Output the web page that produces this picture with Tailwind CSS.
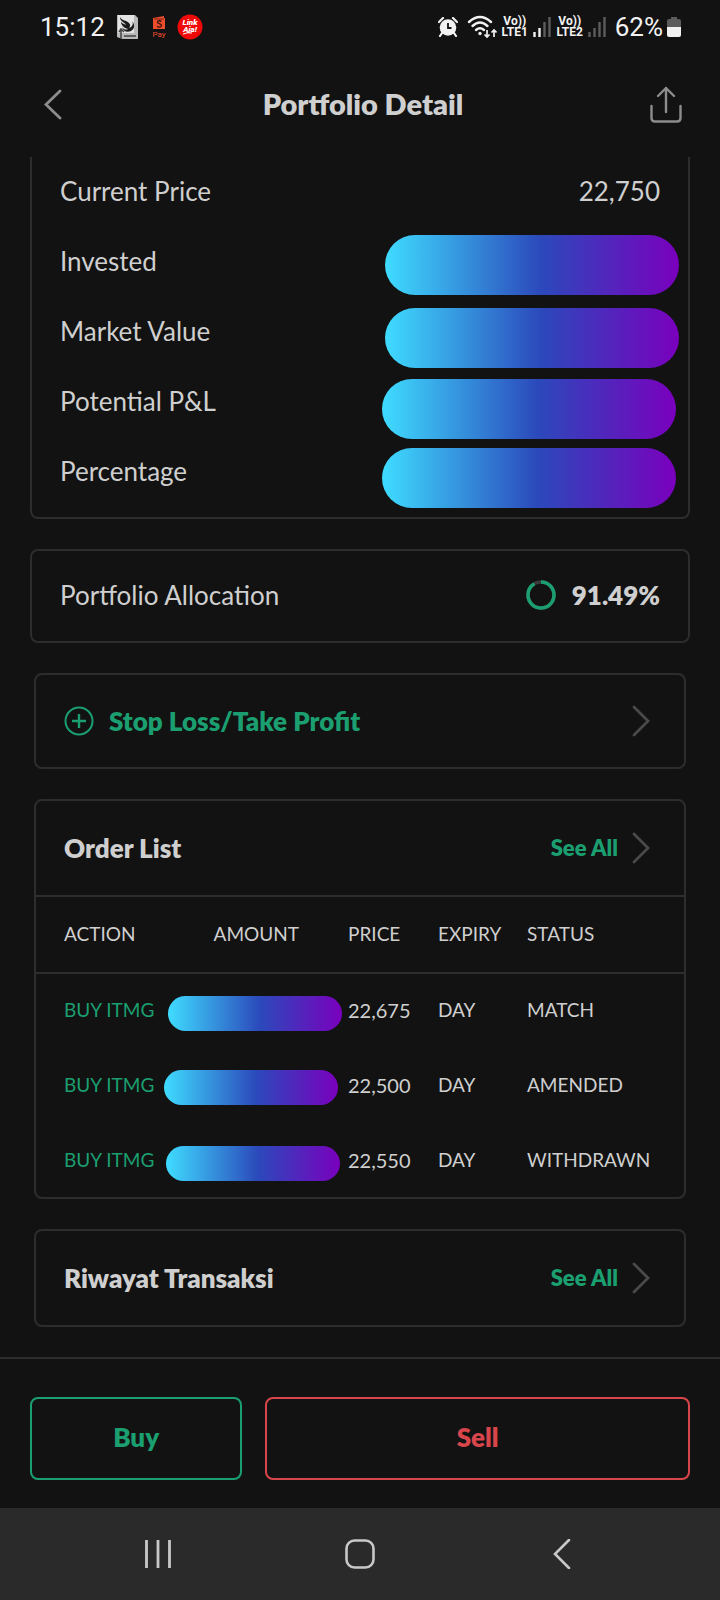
<!DOCTYPE html>
<html lang="id">
<head>
    <meta charset="UTF-8">
    <meta name="viewport" content="width=device-width, initial-scale=1.0">
    <title>Portfolio Detail</title>
    <script src="https://cdn.jsdelivr.net/npm/@tailwindcss/browser@4"></script>
</head>
<body class="bg-[#121212] text-[#cfcfcf] font-['Lato',sans-serif] text-[26px] leading-8">
    <div class="min-h-screen flex flex-col">

        <!-- Status bar -->
        <div class="h-[54px] pl-10 pr-[39px] flex items-center justify-between text-[#f2f2f2] font-['Roboto',sans-serif]">
            <div class="flex items-center">
                <span class="text-[26px]">15:12</span>
                <svg class="ml-3 w-[22px] h-[26px]" viewBox="0 0 22 26">
                    <path d="M0 1h18l3 3v21H5l-5-2z" fill="#b9b9b9"/>
                    <path d="M1 1h16v18H1z" fill="#e4e4e4"/>
                    <path d="M3 3c2 4 6 3 9 6 2 2 1 4 0 5 3-1 5-4 3-7 3 3 3 8-1 10-4 2-8 0-9-4 2 3 5 3 6 2C7 14 4 11 4 8c2 2 4 2 5 3C8 8 3 8 3 3z" fill="#1b1b1b"/>
                    <path d="M4 15v10M2 18l2-3 3 3M7 22h12" stroke="#444" stroke-width="1.5" fill="none"/>
                </svg>
                <svg class="ml-3 w-4 h-[26px]" viewBox="0 0 16 26">
                    <path d="M2 4l11-2v2h1v11H2z" fill="#ee4d2d"/>
                    <path d="M3 5h10" stroke="#7c2414" stroke-width="1"/>
                    <path d="M10.500 7.500c-2-1.500-4.500-.5-4 1 .5 1.300 4 1 4 3s-3 2-4.500.7" stroke="#3a120b" stroke-width="1.300" fill="none"/>
                    <text x="8" y="23" text-anchor="middle" font-size="8" fill="#ee4d2d">Pay</text>
                </svg>
                <svg class="ml-[10px] w-[26px] h-[26px]" viewBox="0 0 26 26">
                    <circle cx="13" cy="13" r="12.500" fill="#ef0a0a"/>
                    <g fill="#fff" font-size="8" font-weight="900" font-style="italic" text-anchor="middle">
                        <text x="13" y="11">Link</text>
                        <text x="13" y="17.500">Aja!</text>
                    </g>
                    <path d="M6 20q5-2 9-1" stroke="#fff" stroke-width="1" fill="none"/>
                </svg>
            </div>
            <div class="flex items-center">
                <svg class="w-5 h-5" viewBox="0 0 20 20">
                    <path d="M1 5l4-4M19 5l-4-4M4 16l-2 3M16 16l2 3" stroke="#f2f2f2" stroke-width="2.200" stroke-linecap="round"/>
                    <circle cx="10" cy="10.500" r="8.300" fill="#f2f2f2"/>
                    <path d="M10 6v5h3.500" stroke="#121212" stroke-width="1.800" fill="none"/>
                </svg>
                <svg class="ml-[9px] w-[30px] h-6" viewBox="0 0 30 24">
                    <g fill="none" stroke="#f2f2f2" stroke-width="2.400" stroke-linecap="round">
                        <path d="M2 7q11-10 22 0"/>
                        <path d="M5.500 11q7.500-7 15 0"/>
                        <path d="M9 15q4-3.500 8 0"/>
                    </g>
                    <circle cx="13" cy="18.500" r="1.700" fill="#f2f2f2"/>
                    <path d="M20 15v7M17.500 19.500l2.500 2.500 2.500-2.500M27 22v-7M24.500 17.500l2.500-2.500 2.500 2.500" fill="none" stroke="#f2f2f2" stroke-width="1.700"/>
                </svg>
                <div class="ml-1 w-[28px] text-[12px] leading-[11px] font-bold text-center">Vo))<br>LTE1</div>
                <svg class="ml-1 w-[18px] h-5" viewBox="0 0 18 20">
                    <path d="M1.500 20v-5M6.500 20v-9" stroke="#f2f2f2" stroke-width="2.400"/>
                    <path d="M11.500 20V5M16.500 20V0" stroke="#5c5c5c" stroke-width="2.400"/>
                </svg>
                <div class="ml-[5px] w-[28px] text-[12px] leading-[11px] font-bold text-center">Vo))<br>LTE2</div>
                <svg class="ml-1 w-[18px] h-5" viewBox="0 0 18 20">
                    <path d="M1.500 20v-5M6.500 20v-9M11.500 20V5M16.500 20V0" stroke="#5c5c5c" stroke-width="2.400"/>
                </svg>
                <span class="ml-[9px] text-[26px]">62%</span>
                <svg class="ml-1 w-[14px] h-5" viewBox="0 0 14 20">
                    <path d="M4 0h6v2h2q2 0 2 2v6H0V4q0-2 2-2h2z" fill="#5c5c5c"/>
                    <path d="M0 10h14v8q0 2-2 2H2q-2 0-2-2z" fill="#f2f2f2"/>
                </svg>
            </div>
        </div>

        <!-- Title bar -->
        <header class="h-[103px] pl-11 pr-[38px] pb-0.5 flex items-center justify-between">
            <button type="button" aria-label="Back" class="w-8 h-9">
                <svg class="w-[18px] h-9" viewBox="0 0 18 36">
                    <path d="M16 4L2 17.500 16 31" fill="none" stroke="#8c8c8c" stroke-width="2.800" stroke-linecap="round"/>
                </svg>
            </button>
            <h1 class="pb-0.5 text-[29px] font-extrabold">Portfolio Detail</h1>
            <button type="button" aria-label="Share" class="w-8 h-[38px]">
                <svg class="w-8 h-[38px]" viewBox="0 0 32 38">
                    <path d="M1.500 20v12q0 3.500 3.500 3.500h22q3.500 0 3.500-3.500V20M16 26V2M8 10l8-8 8 8" fill="none" stroke="#8c8c8c" stroke-width="2.400" stroke-linecap="round" stroke-linejoin="round"/>
                </svg>
            </button>
        </header>

        <main class="flex-1 flex flex-col gap-[30px] px-[30px] pb-[30px]">
            <!-- Position summary -->
            <dl class="border-2 border-t-0 border-[#2d2d2d] rounded-b-lg pb-[10px]">
                <div class="h-[70px] px-7 pb-0.5 flex items-center justify-between">
                    <dt>Current Price</dt>
                    <dd>22,750</dd>
                </div>
                <div class="relative h-[70px] px-7 pb-0.5 flex items-center">
                    <dt>Invested</dt>
                    <dd class="absolute right-[9px] top-2 w-[294px] h-[60px] rounded-full bg-linear-to-r/srgb from-[#3fdcff] via-[#2b49bb] via-53% to-[#7a00bd]"></dd>
                </div>
                <div class="relative h-[70px] px-7 pb-0.5 flex items-center">
                    <dt>Market Value</dt>
                    <dd class="absolute right-[9px] top-[11px] w-[294px] h-[60px] rounded-full bg-linear-to-r/srgb from-[#3fdcff] via-[#2b49bb] via-53% to-[#7a00bd]"></dd>
                </div>
                <div class="relative h-[70px] px-7 pb-0.5 flex items-center">
                    <dt>Potential P&amp;L</dt>
                    <dd class="absolute right-3 top-3 w-[294px] h-[60px] rounded-full bg-linear-to-r/srgb from-[#3fdcff] via-[#2b49bb] via-53% to-[#7a00bd]"></dd>
                </div>
                <div class="relative h-[70px] px-7 pb-0.5 flex items-center">
                    <dt>Percentage</dt>
                    <dd class="absolute right-3 top-[11px] w-[294px] h-[60px] rounded-full bg-linear-to-r/srgb from-[#3fdcff] via-[#2b49bb] via-53% to-[#7a00bd]"></dd>
                </div>
            </dl>

            <!-- Allocation -->
            <section class="h-[94px] px-7 pb-0.5 flex items-center border-2 border-[#2d2d2d] rounded-lg">
                <span class="flex-1">Portfolio Allocation</span>
                <svg class="w-[30px] h-[30px] -rotate-90" viewBox="0 0 30 30" fill="none" stroke-width="3.500">
                    <circle cx="15" cy="15" r="13" stroke="#3a3a3a"/>
                    <circle cx="15" cy="15" r="13" stroke="#1b9f70" pathLength="100" stroke-dasharray="91.490 100"/>
                </svg>
                <span class="ml-4 font-extrabold">91.49%</span>
            </section>

            <div class="flex flex-col gap-[30px] px-1">
                <button type="button" class="h-24 pl-7 pr-[34px] flex items-center border-2 border-[#2d2d2d] rounded-lg text-[#1b9f70] font-extrabold">
                    <svg class="w-[30px] h-[30px]" viewBox="0 0 30 30" fill="none" stroke="#1b9f70" stroke-width="2">
                        <circle cx="15" cy="15" r="13.500"/>
                        <path d="M15 8v14M8 15h14" stroke-width="2.400"/>
                    </svg>
                    <span class="ml-[15px] flex-1 text-left">Stop Loss/Take Profit</span>
                    <svg class="w-[18px] h-8" viewBox="0 0 18 32">
                        <path d="M2 2l14 14L2 30" fill="none" stroke="#4a4a4a" stroke-width="2.800" stroke-linecap="round"/>
                    </svg>
                </button>

                <!-- Orders -->
                <section class="border-2 border-[#2d2d2d] rounded-lg">
                    <div class="h-24 pl-7 pr-[34px] flex items-center border-b-2 border-[#2d2d2d]">
                        <h2 class="flex-1 font-extrabold">Order List</h2>
                        <a href="#" class="flex items-center text-[#1b9f70] text-[22px] font-extrabold">See All
                            <svg class="ml-[14px] w-[18px] h-8" viewBox="0 0 18 32">
                                <path d="M2 2l14 14L2 30" fill="none" stroke="#4a4a4a" stroke-width="2.800" stroke-linecap="round"/>
                            </svg>
                        </a>
                    </div>
                    <table class="-mb-px w-full table-fixed text-[19px] text-left">
                        <thead>
                            <tr class="h-[76px] border-b-2 border-[#2d2d2d]">
                                <th class="w-[132px] pl-7 pb-0.5 font-normal">ACTION</th>
                                <th class="w-[131px] pb-0.5 font-normal text-right">AMOUNT</th>
                                <th class="w-[139px] pl-[49px] pb-0.5 font-normal">PRICE</th>
                                <th class="w-[89px] pb-0.5 font-normal">EXPIRY</th>
                                <th class="pb-0.5 font-normal">STATUS</th>
                            </tr>
                        </thead>
                        <tbody>
                            <tr class="h-[75px]">
                                <td class="pl-7 pb-0.5 text-[#1b9f70] whitespace-nowrap">BUY ITMG</td>
                                <td class="relative"><div class="absolute left-0 top-[22px] w-[174px] h-[35px] rounded-full bg-linear-to-r/srgb from-[#3fdcff] via-[#2b49bb] via-53% to-[#7a00bd]"></div></td>
                                <td class="pl-[49px] pb-0.5 text-[20px]">22,675</td>
                                <td class="pb-0.5">DAY</td>
                                <td class="pb-0.5">MATCH</td>
                            </tr>
                            <tr class="h-[75px]">
                                <td class="pl-7 pb-0.5 text-[#1b9f70] whitespace-nowrap">BUY ITMG</td>
                                <td class="relative"><div class="absolute -left-1 top-[22px] w-[174px] h-[35px] rounded-full bg-linear-to-r/srgb from-[#3fdcff] via-[#2b49bb] via-53% to-[#7a00bd]"></div></td>
                                <td class="pl-[49px] pb-0.5 text-[20px]">22,500</td>
                                <td class="pb-0.5">DAY</td>
                                <td class="pb-0.5">AMENDED</td>
                            </tr>
                            <tr class="h-[75px]">
                                <td class="pl-7 pb-0.5 text-[#1b9f70] whitespace-nowrap">BUY ITMG</td>
                                <td class="relative"><div class="absolute -left-0.5 top-[23px] w-[174px] h-[35px] rounded-full bg-linear-to-r/srgb from-[#3fdcff] via-[#2b49bb] via-53% to-[#7a00bd]"></div></td>
                                <td class="pl-[49px] pb-0.5 text-[20px]">22,550</td>
                                <td class="pb-0.5">DAY</td>
                                <td class="pb-0.5">WITHDRAWN</td>
                            </tr>
                        </tbody>
                    </table>
                </section>

                <!-- Transaction history -->
                <section class="h-[98px] pl-7 pr-[34px] flex items-center border-2 border-[#2d2d2d] rounded-lg">
                    <h2 class="flex-1 font-extrabold">Riwayat Transaksi</h2>
                    <a href="#" class="flex items-center text-[#1b9f70] text-[22px] font-extrabold">See All
                        <svg class="ml-[14px] w-[18px] h-8" viewBox="0 0 18 32">
                            <path d="M2 2l14 14L2 30" fill="none" stroke="#4a4a4a" stroke-width="2.800" stroke-linecap="round"/>
                        </svg>
                    </a>
                </section>
            </div>
        </main>

        <footer class="grid grid-cols-[1fr_2fr] gap-[23px] px-[30px] pt-[38px] pb-7 border-t-2 border-[#2d2d2d]">
            <button type="button" class="h-[83px] pb-1 border-2 border-[#1b9f70] rounded-lg text-[#1b9f70] font-extrabold">Buy</button>
            <button type="button" class="h-[83px] pb-1 border-2 border-[#d8464c] rounded-lg text-[#d8464c] font-extrabold">Sell</button>
        </footer>

        <!-- System navigation -->
        <nav class="h-[92px] px-[57px] grid grid-cols-3 bg-[#2a2a2a]">
            <button type="button" aria-label="Recents" class="flex items-center justify-center">
                <svg class="w-[30px] h-[30px]" viewBox="0 0 30 30"><path d="M3.500 1v28M15 1v28M26.500 1v28" stroke="#c8c8c8" stroke-width="2.800"/></svg>
            </button>
            <button type="button" aria-label="Home" class="flex items-center justify-center">
                <svg class="w-[30px] h-[30px]" viewBox="0 0 30 30"><rect x="1.500" y="1.500" width="27" height="27" rx="8" fill="none" stroke="#c8c8c8" stroke-width="2.600"/></svg>
            </button>
            <button type="button" aria-label="Back" class="flex items-center justify-center">
                <svg class="w-[30px] h-[30px]" viewBox="0 0 30 30"><path d="M22 1L8 15l14 14" fill="none" stroke="#c8c8c8" stroke-width="2.600" stroke-linecap="round"/></svg>
            </button>
        </nav>
    </div>
</body>
</html>
